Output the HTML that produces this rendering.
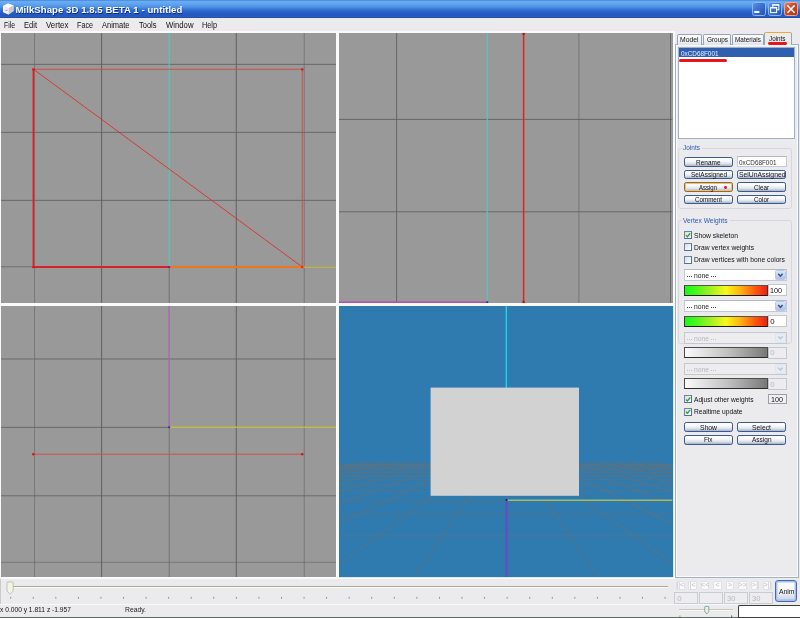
<!DOCTYPE html>
<html><head><meta charset="utf-8"><title>MilkShape 3D 1.8.5 BETA 1 - untitled</title>
<style>
html,body{margin:0;padding:0;overflow:hidden;}
html{width:800px;height:618px;}
body{width:800px;height:618px;overflow:hidden;position:relative;background:#ebebee;font-family:"Liberation Sans",sans-serif;}
.t{position:absolute;white-space:nowrap;font-family:"Liberation Sans",sans-serif;}
.abs{position:absolute;}
svg{position:absolute;left:0;top:0;overflow:visible;}
.btn{position:absolute;box-sizing:border-box;border:1px solid #3d5a8a;border-radius:2.2px;background:linear-gradient(#ffffff 0%,#f6f7fa 40%,#dbe0ea 72%,#a2b1c9 100%);filter:blur(0.25px);}
.btnhot{border-color:#8a6a3a;box-shadow:inset 0 0 0 1px #f0c070;}
.edit{position:absolute;box-sizing:border-box;border:1px solid #c3cad6;border-top-color:#b4b8c0;background:#fff;}
.editd{position:absolute;box-sizing:border-box;border:1px solid #c4c7cf;background:#ededf0;}
.chk{position:absolute;box-sizing:border-box;border:1px solid #4f6f9f;border-top-color:#6a86b0;border-left-color:#6a86b0;background:linear-gradient(135deg,#dcdcd4,#ffffff);filter:blur(0.3px);}
</style></head><body>

<div class="abs" style="left:0;top:0;width:800px;height:18px;background:linear-gradient(#3d7bd8 0%,#6badf0 7%,#62a4ee 22%,#4d90e4 40%,#3676d6 52%,#2862c8 66%,#2357be 84%,#2a5cc4 93%,#1a46a6 100%);"></div>
<svg width="800" height="18" viewBox="0 0 800 18">
<g filter="url(#b1)">
<polygon points="3,6 8,3.5 13.5,5.5 13.5,11 8.5,14.5 3,12" fill="#e8e8e8"/>
<polygon points="3,6 8,3.5 13.5,5.5 8.5,8" fill="#ffffff"/>
<polygon points="8.5,8 13.5,5.5 13.5,11 8.5,14.5" fill="#c9c9c9"/>
<polygon points="3,6 8.5,8 8.5,14.5 3,12" fill="#f2f0ee"/>
<path d="M5.5 10.5 L7.5 10" stroke="#d06050" stroke-width="0.8"/>
</g>
<defs><filter id="b1"><feGaussianBlur stdDeviation="0.4"/></filter></defs>
</svg>
<div class="t" style="left:15.50px;top:3.81px;font-size:9.6px;line-height:11.030px;color:#fff;letter-spacing:0.045px;font-weight:bold;filter:blur(0.3px);text-shadow:0.6px 0.8px 0.6px #0a2a80;">MilkShape 3D 1.8.5 BETA 1 - untitled</div>
<div style="position:absolute;left:752px;top:2px;width:14px;height:14px;box-sizing:border-box;border:1px solid #8fb4ec;border-radius:2.5px;background:linear-gradient(135deg,#5c93e6 0%,#3f78d8 35%,#2f62c8 70%,#2a56b8 100%);"></div>
<div style="position:absolute;left:768px;top:2px;width:14px;height:14px;box-sizing:border-box;border:1px solid #8fb4ec;border-radius:2.5px;background:linear-gradient(135deg,#5c93e6 0%,#3f78d8 35%,#2f62c8 70%,#2a56b8 100%);"></div>
<div style="position:absolute;left:784px;top:2px;width:14px;height:14px;box-sizing:border-box;border:1px solid #e8a890;border-radius:2.5px;background:linear-gradient(135deg,#e08866 0%,#cf4f2f 35%,#c23f22 70%,#b03a20 100%);"></div>
<svg width="800" height="18" viewBox="0 0 800 18"><g filter="url(#b2)">
<rect x="754.3" y="11" width="5" height="2" fill="#fff"/>
<rect x="772.8" y="4.8" width="6" height="5" fill="none" stroke="#fff" stroke-width="1"/>
<rect x="772.3" y="4.3" width="7" height="1.3" fill="#fff"/>
<rect x="770.6" y="7.6" width="6" height="5" fill="#3a70d0" stroke="#fff" stroke-width="1"/>
<rect x="770.1" y="7.1" width="7" height="1.3" fill="#fff"/>
<path d="M788 5.9 L794.1 12.2 M794.1 5.9 L788 12.2" stroke="#fff" stroke-width="1.45" stroke-linecap="square"/>
</g><defs><filter id="b2"><feGaussianBlur stdDeviation="0.35"/></filter></defs></svg>
<div style="position:absolute;left:0px;top:18px;width:800px;height:13px;background:#ebebee;"></div>
<div style="position:absolute;left:0px;top:31px;width:800px;height:1.6px;background:#f8f8fa;"></div>
<div class="t" style="left:4.00px;top:20.99px;font-size:8.3px;line-height:9.537px;color:#111;transform:scaleX(0.8225);transform-origin:0 0;filter:blur(0.22px);">File</div>
<div class="t" style="left:23.50px;top:20.99px;font-size:8.3px;line-height:9.537px;color:#111;transform:scaleX(0.9089);transform-origin:0 0;filter:blur(0.22px);">Edit</div>
<div class="t" style="left:45.50px;top:20.99px;font-size:8.3px;line-height:9.537px;color:#111;transform:scaleX(0.9562);transform-origin:0 0;filter:blur(0.22px);">Vertex</div>
<div class="t" style="left:77.00px;top:20.99px;font-size:8.3px;line-height:9.537px;color:#111;transform:scaleX(0.8671);transform-origin:0 0;filter:blur(0.22px);">Face</div>
<div class="t" style="left:102.00px;top:20.99px;font-size:8.3px;line-height:9.537px;color:#111;transform:scaleX(0.9031);transform-origin:0 0;filter:blur(0.22px);">Animate</div>
<div class="t" style="left:139.00px;top:20.99px;font-size:8.3px;line-height:9.537px;color:#111;transform:scaleX(0.9032);transform-origin:0 0;filter:blur(0.22px);">Tools</div>
<div class="t" style="left:165.50px;top:20.99px;font-size:8.3px;line-height:9.537px;color:#111;transform:scaleX(0.9315);transform-origin:0 0;filter:blur(0.22px);">Window</div>
<div class="t" style="left:202.00px;top:20.99px;font-size:8.3px;line-height:9.537px;color:#111;transform:scaleX(0.8787);transform-origin:0 0;filter:blur(0.22px);">Help</div>
<div style="position:absolute;left:0px;top:31px;width:673px;height:548px;background:#fafafc;"></div>
<div style="position:absolute;left:1px;top:33px;width:335px;height:270px;background:#999999;"></div>
<div style="position:absolute;left:339px;top:33px;width:333.5px;height:270px;background:#999999;"></div>
<div style="position:absolute;left:1px;top:306px;width:335px;height:271px;background:#999999;"></div>
<div style="position:absolute;left:339px;top:306px;width:333.5px;height:271px;background:#2f7bb0;"></div>
<svg width="800" height="618" viewBox="0 0 800 618"><defs>
<clipPath id="cTL"><rect x="1" y="33" width="335" height="270"/></clipPath>
<clipPath id="cTR"><rect x="339" y="33" width="333.5" height="270"/></clipPath>
<clipPath id="cBL"><rect x="1" y="306" width="335" height="271"/></clipPath>
<clipPath id="cBR"><rect x="339" y="306" width="333.5" height="271"/></clipPath>
<filter id="bv" x="-5%" y="-5%" width="110%" height="110%"><feGaussianBlur stdDeviation="0.3"/></filter>
</defs><g filter="url(#bv)"><g clip-path="url(#cTL)">
<line x1="34.6" y1="33" x2="34.6" y2="303" stroke="#5e5e5e" stroke-width="1" stroke-opacity="0.55"/>
<line x1="101.6" y1="33" x2="101.6" y2="303" stroke="#5e5e5e" stroke-width="1" stroke-opacity="0.95"/>
<line x1="236.3" y1="33" x2="236.3" y2="303" stroke="#5e5e5e" stroke-width="1" stroke-opacity="0.95"/>
<line x1="304.2" y1="33" x2="304.2" y2="303" stroke="#5e5e5e" stroke-width="1" stroke-opacity="0.55"/>
<line x1="1" y1="64.4" x2="336" y2="64.4" stroke="#5e5e5e" stroke-width="1" stroke-opacity="0.8"/>
<line x1="1" y1="132.4" x2="336" y2="132.4" stroke="#5e5e5e" stroke-width="1" stroke-opacity="0.8"/>
<line x1="1" y1="200.4" x2="336" y2="200.4" stroke="#5e5e5e" stroke-width="1" stroke-opacity="0.8"/>
<line x1="1" y1="266.8" x2="336" y2="266.8" stroke="#5e5e5e" stroke-width="1" stroke-opacity="0.7"/>
<line x1="169.2" y1="33" x2="169.2" y2="266" stroke="#57c6c2" stroke-width="1.2" stroke-opacity="1"/>
<line x1="169.2" y1="268" x2="169.2" y2="303" stroke="#5e5e5e" stroke-width="1" stroke-opacity="0.7"/>
<line x1="302" y1="267" x2="336" y2="267" stroke="#d8d83a" stroke-width="1" stroke-opacity="0.95"/>
<line x1="33.5" y1="69.3" x2="302.3" y2="69.3" stroke="#e0413a" stroke-width="1" stroke-opacity="0.85"/>
<line x1="302.3" y1="69.3" x2="302.3" y2="267" stroke="#e0413a" stroke-width="1" stroke-opacity="0.85"/>
<line x1="33.5" y1="69.3" x2="302.3" y2="267" stroke="#e02a25" stroke-width="0.9" stroke-opacity="0.95"/>
<line x1="33.4" y1="69" x2="33.4" y2="267.5" stroke="#e01d1a" stroke-width="1.6" stroke-opacity="1"/>
<line x1="33" y1="267" x2="169.5" y2="267" stroke="#d8202a" stroke-width="2" stroke-opacity="1"/>
<line x1="169.5" y1="267" x2="302.5" y2="267" stroke="#f0761a" stroke-width="2" stroke-opacity="1"/>
<rect x="32.4" y="68.3" width="2.2" height="2.2" fill="#e01010"/>
<rect x="301.2" y="68.3" width="2.2" height="2.2" fill="#d01818"/>
<rect x="301.2" y="266" width="2.2" height="2.2" fill="#e03010"/>
<rect x="32.4" y="266" width="2.2" height="2.2" fill="#e01010"/>
<rect x="168.4" y="266.2" width="1.8" height="1.8" fill="#5a2a90"/>
</g>
<g clip-path="url(#cTR)">
<line x1="396.6" y1="33" x2="396.6" y2="303" stroke="#5e5e5e" stroke-width="1" stroke-opacity="0.85"/>
<line x1="578.9" y1="33" x2="578.9" y2="303" stroke="#5e5e5e" stroke-width="1" stroke-opacity="0.6"/>
<line x1="670.5" y1="33" x2="670.5" y2="303" stroke="#5e5e5e" stroke-width="1" stroke-opacity="0.8"/>
<line x1="339" y1="119.4" x2="672.5" y2="119.4" stroke="#5e5e5e" stroke-width="1" stroke-opacity="0.85"/>
<line x1="339" y1="211.8" x2="672.5" y2="211.8" stroke="#5e5e5e" stroke-width="1" stroke-opacity="0.85"/>
<line x1="487.3" y1="33" x2="487.3" y2="302" stroke="#57c6c2" stroke-width="1.2" stroke-opacity="1"/>
<line x1="523.6" y1="33" x2="523.6" y2="303" stroke="#e02020" stroke-width="1.5" stroke-opacity="1"/>
<rect x="522.5" y="33" width="2.2" height="2" fill="#c01010"/>
<rect x="522.5" y="300.8" width="2.2" height="2.2" fill="#c01010"/>
<line x1="339" y1="302.2" x2="487" y2="302.2" stroke="#b050b0" stroke-width="1.4" stroke-opacity="1"/>
<rect x="486.4" y="301.2" width="1.8" height="1.8" fill="#2a2a90"/>
</g>
<g clip-path="url(#cBL)">
<line x1="34.6" y1="306" x2="34.6" y2="577" stroke="#5e5e5e" stroke-width="1" stroke-opacity="0.55"/>
<line x1="101.6" y1="306" x2="101.6" y2="577" stroke="#5e5e5e" stroke-width="1" stroke-opacity="0.95"/>
<line x1="169.2" y1="306" x2="169.2" y2="577" stroke="#5e5e5e" stroke-width="1" stroke-opacity="0.6"/>
<line x1="236.3" y1="306" x2="236.3" y2="577" stroke="#5e5e5e" stroke-width="1" stroke-opacity="0.95"/>
<line x1="304.2" y1="306" x2="304.2" y2="577" stroke="#5e5e5e" stroke-width="1" stroke-opacity="0.55"/>
<line x1="1" y1="359" x2="336" y2="359" stroke="#5e5e5e" stroke-width="1" stroke-opacity="0.8"/>
<line x1="1" y1="427.4" x2="336" y2="427.4" stroke="#5e5e5e" stroke-width="1" stroke-opacity="0.8"/>
<line x1="1" y1="495.8" x2="336" y2="495.8" stroke="#5e5e5e" stroke-width="1" stroke-opacity="0.8"/>
<line x1="1" y1="562.3" x2="336" y2="562.3" stroke="#5e5e5e" stroke-width="1" stroke-opacity="0.55"/>
<line x1="169.2" y1="306" x2="169.2" y2="427" stroke="#b868c0" stroke-width="1.1" stroke-opacity="1"/>
<line x1="169.5" y1="427.2" x2="336" y2="427.2" stroke="#dede3c" stroke-width="1.0" stroke-opacity="1"/>
<rect x="168.3" y="426.3" width="1.8" height="1.8" fill="#2a2ab0"/>
<line x1="33" y1="454.2" x2="302.5" y2="454.2" stroke="#d84840" stroke-width="1" stroke-opacity="0.9"/>
<rect x="32.2" y="453.1" width="2.2" height="2.2" fill="#e01010"/>
<rect x="301.2" y="453.1" width="2.2" height="2.2" fill="#c81818"/>
</g>
<g clip-path="url(#cBR)">
<line x1="358.07" y1="463.10" x2="-810.56" y2="620.00" stroke="#786c64" stroke-width="0.9" stroke-opacity="0.66"/>
<line x1="369.05" y1="463.10" x2="-713.01" y2="620.00" stroke="#786c64" stroke-width="0.9" stroke-opacity="0.66"/>
<line x1="382.77" y1="463.10" x2="-591.08" y2="620.00" stroke="#786c64" stroke-width="0.9" stroke-opacity="0.66"/>
<line x1="396.50" y1="463.10" x2="-469.15" y2="620.00" stroke="#786c64" stroke-width="0.9" stroke-opacity="0.66"/>
<line x1="410.22" y1="463.10" x2="-347.22" y2="620.00" stroke="#786c64" stroke-width="0.9" stroke-opacity="0.66"/>
<line x1="423.95" y1="463.10" x2="-225.29" y2="620.00" stroke="#786c64" stroke-width="0.9" stroke-opacity="0.66"/>
<line x1="437.67" y1="463.10" x2="-103.36" y2="620.00" stroke="#786c64" stroke-width="0.9" stroke-opacity="0.66"/>
<line x1="451.40" y1="463.10" x2="18.58" y2="620.00" stroke="#786c64" stroke-width="0.9" stroke-opacity="0.66"/>
<line x1="465.12" y1="463.10" x2="140.51" y2="620.00" stroke="#786c64" stroke-width="0.9" stroke-opacity="0.66"/>
<line x1="478.85" y1="463.10" x2="262.44" y2="620.00" stroke="#786c64" stroke-width="0.9" stroke-opacity="0.66"/>
<line x1="492.57" y1="463.10" x2="384.37" y2="620.00" stroke="#786c64" stroke-width="0.9" stroke-opacity="0.66"/>
<line x1="506.30" y1="463.10" x2="506.30" y2="620.00" stroke="#786c64" stroke-width="0.9" stroke-opacity="0.66"/>
<line x1="520.03" y1="463.10" x2="628.23" y2="620.00" stroke="#786c64" stroke-width="0.9" stroke-opacity="0.66"/>
<line x1="533.75" y1="463.10" x2="750.16" y2="620.00" stroke="#786c64" stroke-width="0.9" stroke-opacity="0.66"/>
<line x1="547.48" y1="463.10" x2="872.09" y2="620.00" stroke="#786c64" stroke-width="0.9" stroke-opacity="0.66"/>
<line x1="561.20" y1="463.10" x2="994.02" y2="620.00" stroke="#786c64" stroke-width="0.9" stroke-opacity="0.66"/>
<line x1="574.93" y1="463.10" x2="1115.96" y2="620.00" stroke="#786c64" stroke-width="0.9" stroke-opacity="0.66"/>
<line x1="588.65" y1="463.10" x2="1237.89" y2="620.00" stroke="#786c64" stroke-width="0.9" stroke-opacity="0.66"/>
<line x1="602.38" y1="463.10" x2="1359.82" y2="620.00" stroke="#786c64" stroke-width="0.9" stroke-opacity="0.66"/>
<line x1="616.10" y1="463.10" x2="1481.75" y2="620.00" stroke="#786c64" stroke-width="0.9" stroke-opacity="0.66"/>
<line x1="629.83" y1="463.10" x2="1603.68" y2="620.00" stroke="#786c64" stroke-width="0.9" stroke-opacity="0.66"/>
<line x1="643.55" y1="463.10" x2="1725.61" y2="620.00" stroke="#786c64" stroke-width="0.9" stroke-opacity="0.66"/>
<line x1="654.53" y1="463.10" x2="1823.16" y2="620.00" stroke="#786c64" stroke-width="0.9" stroke-opacity="0.66"/>
<line x1="358.07" y1="463.10" x2="654.53" y2="463.10" stroke="#786c64" stroke-width="0.85" stroke-opacity="0.5"/>
<line x1="347.69" y1="464.49" x2="664.91" y2="464.49" stroke="#786c64" stroke-width="0.85" stroke-opacity="0.5"/>
<line x1="335.76" y1="466.10" x2="676.84" y2="466.10" stroke="#786c64" stroke-width="0.85" stroke-opacity="0.5"/>
<line x1="321.88" y1="467.96" x2="690.72" y2="467.96" stroke="#786c64" stroke-width="0.85" stroke-opacity="0.5"/>
<line x1="305.55" y1="470.15" x2="707.05" y2="470.15" stroke="#786c64" stroke-width="0.85" stroke-opacity="0.5"/>
<line x1="286.04" y1="472.77" x2="726.56" y2="472.77" stroke="#786c64" stroke-width="0.85" stroke-opacity="0.5"/>
<line x1="262.33" y1="475.96" x2="750.27" y2="475.96" stroke="#786c64" stroke-width="0.85" stroke-opacity="0.5"/>
<line x1="232.90" y1="479.91" x2="779.70" y2="479.91" stroke="#786c64" stroke-width="0.85" stroke-opacity="0.5"/>
<line x1="195.39" y1="484.94" x2="817.21" y2="484.94" stroke="#786c64" stroke-width="0.85" stroke-opacity="0.5"/>
<line x1="145.96" y1="491.58" x2="866.64" y2="491.58" stroke="#786c64" stroke-width="0.85" stroke-opacity="0.5"/>
<line x1="77.85" y1="500.72" x2="934.75" y2="500.72" stroke="#786c64" stroke-width="0.85" stroke-opacity="0.5"/>
<line x1="-22.02" y1="514.13" x2="1034.62" y2="514.13" stroke="#786c64" stroke-width="0.85" stroke-opacity="0.5"/>
<line x1="-182.61" y1="535.69" x2="1195.21" y2="535.69" stroke="#786c64" stroke-width="0.85" stroke-opacity="0.5"/>
<line x1="506.3" y1="306" x2="506.3" y2="388" stroke="#20d8f0" stroke-width="1.3" stroke-opacity="1"/>
<line x1="506.5" y1="500.2" x2="672.5" y2="500.2" stroke="#d4e048" stroke-width="1.0" stroke-opacity="1"/>
<line x1="506.6" y1="500" x2="506.6" y2="577" stroke="#6a48c8" stroke-width="2" stroke-opacity="1"/>
<rect x="430.6" y="387.6" width="148.4" height="108.2" fill="#d2d2d2"/>
<rect x="505.6" y="499" width="1.8" height="1.8" fill="#1a1a80"/>
</g></g></svg>
<div style="position:absolute;left:673px;top:31px;width:127px;height:587px;background:#ebebee;"></div>
<div style="position:absolute;left:672.8px;top:31px;width:2.4px;height:548px;background:#fafbfe;"></div>
<div style="position:absolute;left:672.8px;top:306px;width:1.6px;height:271px;background:#d8ebfa;"></div>
<div style="position:absolute;left:675px;top:44.1px;width:124.2px;height:533.8px;box-sizing:border-box;border:1px solid #a3afc2;background:#ebebee;box-shadow:inset 1px 1px 0 #f8f9fc,inset -1px -1px 0 #fbfbfd;"></div>
<div style="position:absolute;left:677px;top:34.0px;width:24.8px;height:10.6px;box-sizing:border-box;border:1px solid #97a5b8;border-bottom:none;border-radius:2px 2px 0 0;background:linear-gradient(#fdfdfe,#f0f1f5 60%,#dfe3ec);"></div>
<div style="position:absolute;left:703px;top:34.0px;width:27.6px;height:10.6px;box-sizing:border-box;border:1px solid #97a5b8;border-bottom:none;border-radius:2px 2px 0 0;background:linear-gradient(#fdfdfe,#f0f1f5 60%,#dfe3ec);"></div>
<div style="position:absolute;left:732px;top:34.0px;width:32px;height:10.6px;box-sizing:border-box;border:1px solid #97a5b8;border-bottom:none;border-radius:2px 2px 0 0;background:linear-gradient(#fdfdfe,#f0f1f5 60%,#dfe3ec);"></div>
<div style="position:absolute;left:764.3px;top:32.1px;width:27.8px;height:13.2px;box-sizing:border-box;border:1px solid #97a5b8;border-bottom:none;border-radius:2px 2px 0 0;background:#ebebee;border-top:1.6px solid #f0a830;"></div>
<div class="t" style="left:680.30px;top:36.12px;font-size:7.6px;line-height:8.732px;color:#111;transform:scaleX(0.8937);transform-origin:0 0;filter:blur(0.22px);">Model</div>
<div class="t" style="left:706.50px;top:36.12px;font-size:7.6px;line-height:8.732px;color:#111;transform:scaleX(0.8426);transform-origin:0 0;filter:blur(0.22px);">Groups</div>
<div class="t" style="left:735.30px;top:36.12px;font-size:7.6px;line-height:8.732px;color:#111;transform:scaleX(0.8433);transform-origin:0 0;filter:blur(0.22px);">Materials</div>
<div class="t" style="left:769.30px;top:35.42px;font-size:7.6px;line-height:8.732px;color:#111;transform:scaleX(0.8311);transform-origin:0 0;filter:blur(0.22px);">Joints</div>
<div style="position:absolute;left:767.6px;top:42.2px;width:19.9px;height:2.9px;background:#e8151a;border-radius:1.45px;filter:blur(0.35px);"></div>
<div style="position:absolute;left:678px;top:47px;width:117px;height:91.5px;box-sizing:border-box;border:1px solid #9fb0c8;background:#fff;"></div>
<div style="position:absolute;left:679.2px;top:48.1px;width:115.2px;height:8.8px;background:#2f5fae;"></div>
<div class="t" style="left:680.60px;top:49.60px;font-size:7.4px;line-height:8.503px;color:#e8eefc;transform:scaleX(0.8600);transform-origin:0 0;filter:blur(0.4px);">0xCD68F001</div>
<div style="position:absolute;left:679.3px;top:58.5px;width:47.6px;height:3.2px;background:#e8151a;border-radius:1.6px;filter:blur(0.35px);"></div>
<div style="position:absolute;left:678.2px;top:147.8px;width:114px;height:61.4px;box-sizing:border-box;border:1px solid #d6d7de;border-radius:3px;"></div>
<div style="position:absolute;left:682.2px;top:143.8px;width:20px;height:8px;background:#ebebee;"></div>
<div class="t" style="left:683.40px;top:144.24px;font-size:7.8px;line-height:8.962px;color:#2a56b0;transform:scaleX(0.8343);transform-origin:0 0;filter:blur(0.4px);">Joints</div>
<div style="position:absolute;left:678.2px;top:220.2px;width:114px;height:123.4px;box-sizing:border-box;border:1px solid #d6d7de;border-radius:3px;"></div>
<div style="position:absolute;left:682.2px;top:216.2px;width:48px;height:8px;background:#ebebee;"></div>
<div class="t" style="left:683.40px;top:216.84px;font-size:7.8px;line-height:8.962px;color:#2a56b0;transform:scaleX(0.8506);transform-origin:0 0;filter:blur(0.4px);">Vertex Weights</div>
<div class="btn" style="left:684.2px;top:157.2px;width:48.6px;height:9.6px;"></div>
<div class="t" style="left:696.25px;top:158.54px;font-size:7.8px;line-height:8.962px;color:#111;transform:scaleX(0.8310);transform-origin:0 0;filter:blur(0.22px);">Rename</div>
<div class="edit" style="left:737.2px;top:156.4px;width:49.4px;height:10.8px;"></div>
<div class="t" style="left:739.30px;top:158.60px;font-size:7.4px;line-height:8.503px;color:#333;transform:scaleX(0.8600);transform-origin:0 0;filter:blur(0.45px);">0xCD68F001</div>
<div class="btn" style="left:684.2px;top:169.6px;width:48.6px;height:9.6px;"></div>
<div class="t" style="left:690.50px;top:170.94px;font-size:7.8px;line-height:8.962px;color:#111;transform:scaleX(0.8302);transform-origin:0 0;filter:blur(0.22px);">SelAssigned</div>
<div class="btn" style="left:737.3px;top:169.6px;width:49.2px;height:9.6px;"></div>
<div class="t" style="left:738.65px;top:170.94px;font-size:7.8px;line-height:8.962px;color:#111;transform:scaleX(0.8719);transform-origin:0 0;filter:blur(0.22px);">SelUnAssigned</div>
<div class="btn btnhot" style="left:684.2px;top:182.3px;width:48.6px;height:9.6px;"></div>
<div class="t" style="left:699.00px;top:183.64px;font-size:7.8px;line-height:8.962px;color:#111;transform:scaleX(0.7688);transform-origin:0 0;filter:blur(0.22px);">Assign</div>
<div style="position:absolute;left:723.9px;top:186.4px;width:2.8px;height:2.8px;background:#e8151a;border-radius:50%;"></div>
<div class="btn" style="left:737.3px;top:182.3px;width:49.2px;height:9.6px;"></div>
<div class="t" style="left:754.40px;top:183.64px;font-size:7.8px;line-height:8.962px;color:#111;transform:scaleX(0.8047);transform-origin:0 0;filter:blur(0.22px);">Clear</div>
<div class="btn" style="left:684.2px;top:194.7px;width:48.6px;height:9.6px;"></div>
<div class="t" style="left:695.00px;top:196.04px;font-size:7.8px;line-height:8.962px;color:#111;transform:scaleX(0.7986);transform-origin:0 0;filter:blur(0.22px);">Comment</div>
<div class="btn" style="left:737.3px;top:194.7px;width:49.2px;height:9.6px;"></div>
<div class="t" style="left:754.40px;top:196.04px;font-size:7.8px;line-height:8.962px;color:#111;transform:scaleX(0.8047);transform-origin:0 0;filter:blur(0.22px);">Color</div>
<div class="chk" style="left:684.2px;top:231px;width:8px;height:8px;"></div>
<svg width="800" height="618" viewBox="0 0 800 618"><path d="M685.90 235.20 L687.40 236.70 L690.20 233.30" fill="none" stroke="#2fa62f" stroke-width="1.35" filter="url(#bchk)"/><defs><filter id="bchk"><feGaussianBlur stdDeviation="0.25"/></filter></defs></svg>
<div class="t" style="left:694.00px;top:231.64px;font-size:7.8px;line-height:8.962px;color:#111;transform:scaleX(0.8673);transform-origin:0 0;filter:blur(0.22px);">Show skeleton</div>
<div class="chk" style="left:684.2px;top:243.3px;width:8px;height:8px;"></div>
<div class="t" style="left:694.00px;top:243.94px;font-size:7.8px;line-height:8.962px;color:#111;transform:scaleX(0.8544);transform-origin:0 0;filter:blur(0.22px);">Draw vertex weights</div>
<div class="chk" style="left:684.2px;top:255.7px;width:8px;height:8px;"></div>
<div class="t" style="left:694.00px;top:256.34px;font-size:7.8px;line-height:8.962px;color:#111;transform:scaleX(0.8603);transform-origin:0 0;filter:blur(0.22px);">Draw vertices with bone colors</div>
<div class="edit" style="left:684.2px;top:269.2px;width:102.4px;height:12.2px;"></div>
<div style="position:absolute;left:775.2px;top:270.2px;width:10.4px;height:10.2px;box-sizing:border-box;border:0.6px solid #b8c8ea;border-radius:1.5px;background:linear-gradient(#dbe6fb,#c3d2f2 60%,#aebfe8);"></div>
<svg width="800" height="618" viewBox="0 0 800 618"><path d="M778.2 273.8 L780.4 276.2 L782.6 273.8" fill="none" stroke="#3a507c" stroke-width="1.5"/></svg>
<div class="t" style="left:693.90px;top:272.04px;font-size:7.8px;line-height:8.962px;color:#222;transform:scaleX(0.8644);transform-origin:0 0;filter:blur(0.22px);">none</div>
<div style="position:absolute;left:686.9px;top:276.2px;width:1.25px;height:0.95px;background:#222;opacity:0.85;"></div>
<div style="position:absolute;left:688.85px;top:276.2px;width:1.25px;height:0.95px;background:#222;opacity:0.85;"></div>
<div style="position:absolute;left:690.8px;top:276.2px;width:1.25px;height:0.95px;background:#222;opacity:0.85;"></div>
<div style="position:absolute;left:711.2px;top:276.2px;width:1.25px;height:0.95px;background:#222;opacity:0.85;"></div>
<div style="position:absolute;left:713.15px;top:276.2px;width:1.25px;height:0.95px;background:#222;opacity:0.85;"></div>
<div style="position:absolute;left:715.1px;top:276.2px;width:1.25px;height:0.95px;background:#222;opacity:0.85;"></div>
<div style="position:absolute;left:684px;top:284.5px;width:84px;height:11.2px;box-sizing:border-box;border:1px solid #3a3a34;border-top-color:#55554a;border-bottom:1.3px solid #1a1a1a;background:linear-gradient(90deg,#1cf816 0%,#38f81c 10%,#9cf020 30%,#f8f818 50%,#ffb010 68%,#ff5a10 85%,#f02010 100%);"></div>
<div class="edit" style="left:768.4px;top:284.1px;width:18.2px;height:12px;border-color:#c2c7d2;"></div>
<div class="t" style="left:770.30px;top:286.84px;font-size:7.8px;line-height:8.962px;color:#111;transform:scaleX(0.9221);transform-origin:0 0;filter:blur(0.22px);">100</div>
<div class="edit" style="left:684.2px;top:300.3px;width:102.4px;height:12.2px;"></div>
<div style="position:absolute;left:775.2px;top:301.3px;width:10.4px;height:10.2px;box-sizing:border-box;border:0.6px solid #b8c8ea;border-radius:1.5px;background:linear-gradient(#dbe6fb,#c3d2f2 60%,#aebfe8);"></div>
<svg width="800" height="618" viewBox="0 0 800 618"><path d="M778.2 304.90000000000003 L780.4 307.3 L782.6 304.90000000000003" fill="none" stroke="#3a507c" stroke-width="1.5"/></svg>
<div class="t" style="left:693.90px;top:303.14px;font-size:7.8px;line-height:8.962px;color:#222;transform:scaleX(0.8644);transform-origin:0 0;filter:blur(0.22px);">none</div>
<div style="position:absolute;left:686.9px;top:307.3px;width:1.25px;height:0.95px;background:#222;opacity:0.85;"></div>
<div style="position:absolute;left:688.85px;top:307.3px;width:1.25px;height:0.95px;background:#222;opacity:0.85;"></div>
<div style="position:absolute;left:690.8px;top:307.3px;width:1.25px;height:0.95px;background:#222;opacity:0.85;"></div>
<div style="position:absolute;left:711.2px;top:307.3px;width:1.25px;height:0.95px;background:#222;opacity:0.85;"></div>
<div style="position:absolute;left:713.15px;top:307.3px;width:1.25px;height:0.95px;background:#222;opacity:0.85;"></div>
<div style="position:absolute;left:715.1px;top:307.3px;width:1.25px;height:0.95px;background:#222;opacity:0.85;"></div>
<div style="position:absolute;left:684px;top:315.6px;width:84px;height:11.2px;box-sizing:border-box;border:1px solid #3a3a34;border-top-color:#55554a;border-bottom:1.3px solid #1a1a1a;background:linear-gradient(90deg,#1cf816 0%,#38f81c 10%,#9cf020 30%,#f8f818 50%,#ffb010 68%,#ff5a10 85%,#f02010 100%);"></div>
<div class="edit" style="left:768.4px;top:315.20000000000005px;width:18.2px;height:12px;border-color:#c2c7d2;"></div>
<div class="t" style="left:770.30px;top:317.94px;font-size:7.8px;line-height:8.962px;color:#111;filter:blur(0.22px);">0</div>
<div class="editd" style="left:684.2px;top:331.8px;width:102.4px;height:12.2px;"></div>
<div style="position:absolute;left:775.2px;top:332.8px;width:10.4px;height:10.2px;box-sizing:border-box;border:0.6px solid #dfe5f0;border-radius:1.5px;background:#e6ebf4;"></div>
<svg width="800" height="618" viewBox="0 0 800 618"><path d="M778.2 336.40000000000003 L780.4 338.8 L782.6 336.40000000000003" fill="none" stroke="#b9c2d4" stroke-width="1.4"/></svg>
<div class="t" style="left:693.90px;top:334.64px;font-size:7.8px;line-height:8.962px;color:#b8b8bc;transform:scaleX(0.8644);transform-origin:0 0;filter:blur(0.22px);">none</div>
<div style="position:absolute;left:686.9px;top:338.8px;width:1.25px;height:0.95px;background:#b8b8bc;opacity:0.85;"></div>
<div style="position:absolute;left:688.85px;top:338.8px;width:1.25px;height:0.95px;background:#b8b8bc;opacity:0.85;"></div>
<div style="position:absolute;left:690.8px;top:338.8px;width:1.25px;height:0.95px;background:#b8b8bc;opacity:0.85;"></div>
<div style="position:absolute;left:711.2px;top:338.8px;width:1.25px;height:0.95px;background:#b8b8bc;opacity:0.85;"></div>
<div style="position:absolute;left:713.15px;top:338.8px;width:1.25px;height:0.95px;background:#b8b8bc;opacity:0.85;"></div>
<div style="position:absolute;left:715.1px;top:338.8px;width:1.25px;height:0.95px;background:#b8b8bc;opacity:0.85;"></div>
<div style="position:absolute;left:684px;top:347px;width:84px;height:11.2px;box-sizing:border-box;border:1px solid #4a4a4a;border-bottom:1.3px solid #2a2a2a;background:linear-gradient(90deg,#fafafa 0%,#e0e0e0 25%,#bdbdbd 55%,#8f8f8f 85%,#787878 100%);"></div>
<div class="editd" style="left:768.4px;top:346.6px;width:18.2px;height:12px;"></div>
<div class="t" style="left:770.30px;top:349.34px;font-size:7.8px;line-height:8.962px;color:#b8b8bc;filter:blur(0.22px);">0</div>
<div class="editd" style="left:684.2px;top:363px;width:102.4px;height:12.2px;"></div>
<div style="position:absolute;left:775.2px;top:364px;width:10.4px;height:10.2px;box-sizing:border-box;border:0.6px solid #dfe5f0;border-radius:1.5px;background:#e6ebf4;"></div>
<svg width="800" height="618" viewBox="0 0 800 618"><path d="M778.2 367.6 L780.4 370 L782.6 367.6" fill="none" stroke="#b9c2d4" stroke-width="1.4"/></svg>
<div class="t" style="left:693.90px;top:365.84px;font-size:7.8px;line-height:8.962px;color:#b8b8bc;transform:scaleX(0.8644);transform-origin:0 0;filter:blur(0.22px);">none</div>
<div style="position:absolute;left:686.9px;top:370.0px;width:1.25px;height:0.95px;background:#b8b8bc;opacity:0.85;"></div>
<div style="position:absolute;left:688.85px;top:370.0px;width:1.25px;height:0.95px;background:#b8b8bc;opacity:0.85;"></div>
<div style="position:absolute;left:690.8px;top:370.0px;width:1.25px;height:0.95px;background:#b8b8bc;opacity:0.85;"></div>
<div style="position:absolute;left:711.2px;top:370.0px;width:1.25px;height:0.95px;background:#b8b8bc;opacity:0.85;"></div>
<div style="position:absolute;left:713.15px;top:370.0px;width:1.25px;height:0.95px;background:#b8b8bc;opacity:0.85;"></div>
<div style="position:absolute;left:715.1px;top:370.0px;width:1.25px;height:0.95px;background:#b8b8bc;opacity:0.85;"></div>
<div style="position:absolute;left:684px;top:378.2px;width:84px;height:11.2px;box-sizing:border-box;border:1px solid #4a4a4a;border-bottom:1.3px solid #2a2a2a;background:linear-gradient(90deg,#fafafa 0%,#e0e0e0 25%,#bdbdbd 55%,#8f8f8f 85%,#787878 100%);"></div>
<div class="editd" style="left:768.4px;top:377.8px;width:18.2px;height:12px;"></div>
<div class="t" style="left:770.30px;top:380.54px;font-size:7.8px;line-height:8.962px;color:#b8b8bc;filter:blur(0.22px);">0</div>
<div class="chk" style="left:684.2px;top:395.2px;width:8px;height:8px;"></div>
<svg width="800" height="618" viewBox="0 0 800 618"><path d="M685.90 399.40 L687.40 400.90 L690.20 397.50" fill="none" stroke="#2fa62f" stroke-width="1.35" filter="url(#bchk)"/><defs><filter id="bchk"><feGaussianBlur stdDeviation="0.25"/></filter></defs></svg>
<div class="t" style="left:694.00px;top:395.84px;font-size:7.8px;line-height:8.962px;color:#111;transform:scaleX(0.8471);transform-origin:0 0;filter:blur(0.22px);">Adjust other weights</div>
<div class="edit" style="left:767.8px;top:394px;width:18.8px;height:10.4px;border-color:#9c9ca6;background:#f1f1f3;"></div>
<div class="t" style="left:770.60px;top:395.64px;font-size:7.8px;line-height:8.962px;color:#111;transform:scaleX(0.9221);transform-origin:0 0;filter:blur(0.22px);">100</div>
<div class="chk" style="left:684.2px;top:407.6px;width:8px;height:8px;"></div>
<svg width="800" height="618" viewBox="0 0 800 618"><path d="M685.90 411.80 L687.40 413.30 L690.20 409.90" fill="none" stroke="#2fa62f" stroke-width="1.35" filter="url(#bchk)"/><defs><filter id="bchk"><feGaussianBlur stdDeviation="0.25"/></filter></defs></svg>
<div class="t" style="left:694.00px;top:408.24px;font-size:7.8px;line-height:8.962px;color:#111;transform:scaleX(0.8538);transform-origin:0 0;filter:blur(0.22px);">Realtime update</div>
<div class="btn" style="left:684.2px;top:422.4px;width:48.6px;height:10px;"></div>
<div class="t" style="left:700.00px;top:423.94px;font-size:7.8px;line-height:8.962px;color:#111;transform:scaleX(0.8713);transform-origin:0 0;filter:blur(0.22px);">Show</div>
<div class="btn" style="left:737.3px;top:422.4px;width:49.2px;height:10px;"></div>
<div class="t" style="left:752.40px;top:423.94px;font-size:7.8px;line-height:8.962px;color:#111;transform:scaleX(0.8764);transform-origin:0 0;filter:blur(0.22px);">Select</div>
<div class="btn" style="left:684.2px;top:434.9px;width:48.6px;height:10px;"></div>
<div class="t" style="left:704.25px;top:436.44px;font-size:7.8px;line-height:8.962px;color:#111;transform:scaleX(0.8175);transform-origin:0 0;filter:blur(0.22px);">Fix</div>
<div class="btn" style="left:737.3px;top:434.9px;width:49.2px;height:10px;"></div>
<div class="t" style="left:752.15px;top:436.44px;font-size:7.8px;line-height:8.962px;color:#111;transform:scaleX(0.8329);transform-origin:0 0;filter:blur(0.22px);">Assign</div>
<div style="position:absolute;left:0px;top:577px;width:673px;height:1.6px;background:#fbfbfd;"></div>
<div style="position:absolute;left:339px;top:577px;width:334px;height:1.4px;background:#d4e8f6;"></div>
<div style="position:absolute;left:0px;top:579px;width:800px;height:39px;background:#ebebee;"></div>
<div style="position:absolute;left:0px;top:579px;width:1.2px;height:25px;background:#c9c9cf;"></div>
<div style="position:absolute;left:12px;top:585.8px;width:656px;height:1px;background:#a9a99f;"></div>
<div style="position:absolute;left:12px;top:586.8px;width:656px;height:1.4px;background:#fbfbf6;"></div>
<svg width="800" height="618" viewBox="0 0 800 618"><path d="M7 582.6 Q7 582 7.6 582 L12.6 582 Q13.2 582 13.2 582.6 L13.2 591 L10.1 594.2 L7 591 Z" fill="#f3f3e6" stroke="#b4b8a8" stroke-width="0.8"/></svg>
<svg width="800" height="618" viewBox="0 0 800 618"><rect x="10.25" y="596.8" width="0.9" height="2" fill="#8f8f95"/><rect x="32.81" y="596.8" width="0.9" height="2" fill="#8f8f95"/><rect x="55.38" y="596.8" width="0.9" height="2" fill="#8f8f95"/><rect x="77.95" y="596.8" width="0.9" height="2" fill="#8f8f95"/><rect x="100.51" y="596.8" width="0.9" height="2" fill="#8f8f95"/><rect x="123.08" y="596.8" width="0.9" height="2" fill="#8f8f95"/><rect x="145.64" y="596.8" width="0.9" height="2" fill="#8f8f95"/><rect x="168.21" y="596.8" width="0.9" height="2" fill="#8f8f95"/><rect x="190.77" y="596.8" width="0.9" height="2" fill="#8f8f95"/><rect x="213.34" y="596.8" width="0.9" height="2" fill="#8f8f95"/><rect x="235.90" y="596.8" width="0.9" height="2" fill="#8f8f95"/><rect x="258.47" y="596.8" width="0.9" height="2" fill="#8f8f95"/><rect x="281.03" y="596.8" width="0.9" height="2" fill="#8f8f95"/><rect x="303.60" y="596.8" width="0.9" height="2" fill="#8f8f95"/><rect x="326.16" y="596.8" width="0.9" height="2" fill="#8f8f95"/><rect x="348.73" y="596.8" width="0.9" height="2" fill="#8f8f95"/><rect x="371.29" y="596.8" width="0.9" height="2" fill="#8f8f95"/><rect x="393.86" y="596.8" width="0.9" height="2" fill="#8f8f95"/><rect x="416.42" y="596.8" width="0.9" height="2" fill="#8f8f95"/><rect x="438.99" y="596.8" width="0.9" height="2" fill="#8f8f95"/><rect x="461.55" y="596.8" width="0.9" height="2" fill="#8f8f95"/><rect x="484.12" y="596.8" width="0.9" height="2" fill="#8f8f95"/><rect x="506.68" y="596.8" width="0.9" height="2" fill="#8f8f95"/><rect x="529.25" y="596.8" width="0.9" height="2" fill="#8f8f95"/><rect x="551.81" y="596.8" width="0.9" height="2" fill="#8f8f95"/><rect x="574.38" y="596.8" width="0.9" height="2" fill="#8f8f95"/><rect x="596.94" y="596.8" width="0.9" height="2" fill="#8f8f95"/><rect x="619.50" y="596.8" width="0.9" height="2" fill="#8f8f95"/><rect x="642.07" y="596.8" width="0.9" height="2" fill="#8f8f95"/><rect x="664.63" y="596.8" width="0.9" height="2" fill="#8f8f95"/></svg>
<div style="position:absolute;left:676.0px;top:580.5px;width:8.6px;height:9px;box-sizing:border-box;border:0.6px solid #e0e1e8;background:#fafafc;border-radius:1px;"></div>
<div class="t" style="left:676.44px;top:581.37px;font-size:7px;line-height:8.043px;color:#b9bbc6;filter:blur(0.3px);">||&lt;</div>
<div style="position:absolute;left:688.45px;top:580.5px;width:8.6px;height:9px;box-sizing:border-box;border:0.6px solid #e0e1e8;background:#fafafc;border-radius:1px;"></div>
<div class="t" style="left:689.80px;top:581.37px;font-size:7px;line-height:8.043px;color:#b9bbc6;filter:blur(0.3px);">|&lt;</div>
<div style="position:absolute;left:700.9px;top:580.5px;width:8.6px;height:9px;box-sizing:border-box;border:0.6px solid #e0e1e8;background:#fafafc;border-radius:1px;"></div>
<div class="t" style="left:701.11px;top:581.37px;font-size:7px;line-height:8.043px;color:#b9bbc6;filter:blur(0.3px);">&lt;&lt;</div>
<div style="position:absolute;left:713.35px;top:580.5px;width:8.6px;height:9px;box-sizing:border-box;border:0.6px solid #e0e1e8;background:#fafafc;border-radius:1px;"></div>
<div class="t" style="left:715.61px;top:581.37px;font-size:7px;line-height:8.043px;color:#b9bbc6;filter:blur(0.3px);">&lt;</div>
<div style="position:absolute;left:725.8px;top:580.5px;width:8.6px;height:9px;box-sizing:border-box;border:0.6px solid #e0e1e8;background:#fafafc;border-radius:1px;"></div>
<div class="t" style="left:728.06px;top:581.37px;font-size:7px;line-height:8.043px;color:#b9bbc6;filter:blur(0.3px);">&gt;</div>
<div style="position:absolute;left:738.25px;top:580.5px;width:8.6px;height:9px;box-sizing:border-box;border:0.6px solid #e0e1e8;background:#fafafc;border-radius:1px;"></div>
<div class="t" style="left:738.46px;top:581.37px;font-size:7px;line-height:8.043px;color:#b9bbc6;filter:blur(0.3px);">&gt;&gt;</div>
<div style="position:absolute;left:750.7px;top:580.5px;width:8.6px;height:9px;box-sizing:border-box;border:0.6px solid #e0e1e8;background:#fafafc;border-radius:1px;"></div>
<div class="t" style="left:752.05px;top:581.37px;font-size:7px;line-height:8.043px;color:#b9bbc6;filter:blur(0.3px);">&gt;|</div>
<div style="position:absolute;left:763.15px;top:580.5px;width:8.6px;height:9px;box-sizing:border-box;border:0.6px solid #e0e1e8;background:#fafafc;border-radius:1px;"></div>
<div class="t" style="left:763.59px;top:581.37px;font-size:7px;line-height:8.043px;color:#b9bbc6;filter:blur(0.3px);">&gt;||</div>
<div class="editd" style="left:674.20px;top:592.2px;width:23.8px;height:11.8px;border-color:#c9ccd4;"></div>
<div class="t" style="left:677.20px;top:594.64px;font-size:7.8px;line-height:8.962px;color:#b8b8bc;filter:blur(0.22px);">0</div>
<div class="editd" style="left:699.25px;top:592.2px;width:23.8px;height:11.8px;border-color:#c9ccd4;"></div>
<div class="editd" style="left:724.30px;top:592.2px;width:23.8px;height:11.8px;border-color:#c9ccd4;"></div>
<div class="t" style="left:727.30px;top:594.64px;font-size:7.8px;line-height:8.962px;color:#b8b8bc;transform:scaleX(0.9682);transform-origin:0 0;filter:blur(0.22px);">30</div>
<div class="editd" style="left:749.35px;top:592.2px;width:23.8px;height:11.8px;border-color:#c9ccd4;"></div>
<div class="t" style="left:752.35px;top:594.64px;font-size:7.8px;line-height:8.962px;color:#b8b8bc;transform:scaleX(0.9682);transform-origin:0 0;filter:blur(0.22px);">30</div>
<div class="btn" style="left:775.4px;top:580.2px;width:22px;height:22px;border-radius:3px;border-color:#456aae;box-shadow:inset 0 0 0 1.4px #a4c0f0;background:linear-gradient(#ffffff,#f2f3f7 55%,#d3dae8 88%,#b5c2d8);"></div>
<div class="t" style="left:778.85px;top:587.94px;font-size:7.8px;line-height:8.962px;color:#111;transform:scaleX(0.8722);transform-origin:0 0;filter:blur(0.22px);">Anim</div>
<div style="position:absolute;left:0px;top:603.6px;width:738px;height:1px;background:#f9f9fb;"></div>
<div class="t" style="left:0.20px;top:605.82px;font-size:7.6px;line-height:8.732px;color:#111;transform:scaleX(0.8767);transform-origin:0 0;filter:blur(0.22px);">x 0.000 y 1.811 z -1.957</div>
<div class="t" style="left:125.00px;top:605.82px;font-size:7.6px;line-height:8.732px;color:#222;transform:scaleX(0.8930);transform-origin:0 0;filter:blur(0.22px);">Ready.</div>
<div style="position:absolute;left:679px;top:609.2px;width:54px;height:1px;background:#c9c9bf;"></div>
<div style="position:absolute;left:679px;top:610.2px;width:54px;height:1px;background:#f7f7f0;"></div>
<svg width="800" height="618" viewBox="0 0 800 618"><path d="M704.8 607 Q704.8 606.4 705.4 606.4 L708.2 606.4 Q708.8 606.4 708.8 607 L708.8 611.6 L706.8 613.9 L704.8 611.6 Z" fill="#eef0ee" stroke="#7aa08a" stroke-width="0.9"/>
<rect x="731.2" y="615.4" width="0.9" height="1.8" fill="#555"/><rect x="679.5" y="615.4" width="0.9" height="1.8" fill="#888"/></svg>
<div style="position:absolute;left:738px;top:605.4px;width:62px;height:12.6px;box-sizing:border-box;border:1.5px solid #3c3c3c;border-right:none;border-bottom:none;border-radius:2px 0 0 0;background:#fff;"></div>
<div style="position:absolute;left:0px;top:616.8px;width:738px;height:1.2px;background:#5e6a60;"></div>
<div style="position:absolute;left:738px;top:616.6px;width:62px;height:1.4px;background:#3c3c3c;"></div>
</body></html>
